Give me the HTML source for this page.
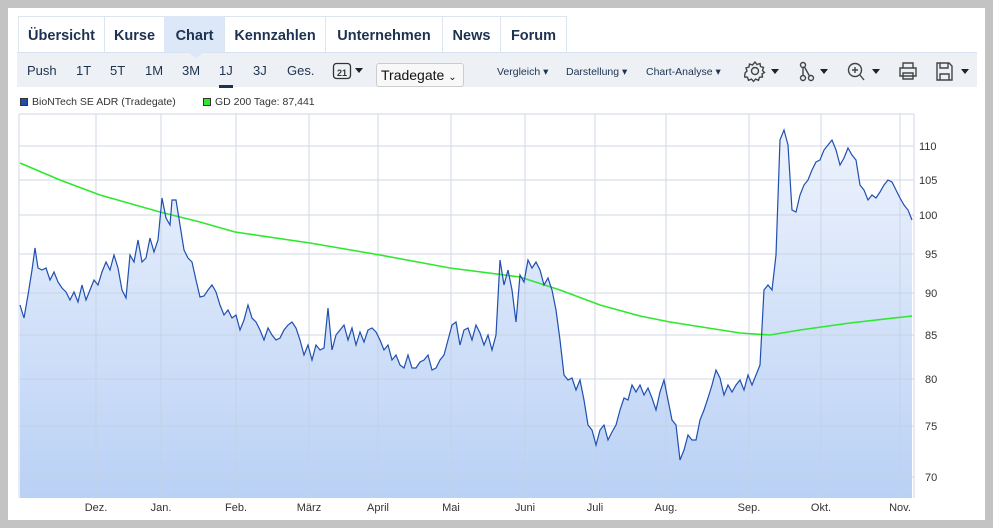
<!DOCTYPE html>
<html><head><meta charset="utf-8"><style>
*{margin:0;padding:0;box-sizing:border-box}
body{width:993px;height:528px;background:#c3c3c3;position:relative;overflow:hidden;font-family:"Liberation Sans",Arial,sans-serif}
#page{position:absolute;left:8px;top:8px;width:977px;height:512px;background:#fff}
.tab{position:absolute;top:16px;height:36px;line-height:38px;font-weight:bold;font-size:14.5px;color:#1d3250;text-align:center;border:1px solid #dde6f0;border-bottom:none}
#tb{position:absolute;left:17px;top:52px;width:960px;height:35px;background:#edf1f5;border-top:1px solid #d6e2f0}
.t{position:absolute;top:63px;font-size:13px;color:#1d3250}
.s{position:absolute;top:66px;font-size:10.5px;color:#1d3250}
.ax{position:absolute;font-size:11px;color:#333}
</style></head><body>
<div id="page"></div>
<div class="tab" style="left:18px;width:87px">Übersicht</div>
<div class="tab" style="left:104px;width:61px">Kurse</div>
<div class="tab" style="left:164px;width:61px;background:#dce8f8;border-color:#dce8f8">Chart</div>
<div class="tab" style="left:224px;width:102px">Kennzahlen</div>
<div class="tab" style="left:325px;width:118px">Unternehmen</div>
<div class="tab" style="left:442px;width:59px">News</div>
<div class="tab" style="left:500px;width:67px">Forum</div>
<div id="tb"></div>
<svg style="position:absolute;left:186px;top:51px" width="20" height="8"><polygon points="0,0 20,0 10,7" fill="#dce8f8"/></svg>
<div class="t" style="left:27px">Push</div>
<div class="t" style="left:76px">1T</div>
<div class="t" style="left:110px">5T</div>
<div class="t" style="left:145px">1M</div>
<div class="t" style="left:182px">3M</div>
<div class="t" style="left:219px">1J</div>
<div style="position:absolute;left:219px;top:85px;width:14px;height:3px;background:#1d3250"></div>
<div class="t" style="left:253px">3J</div>
<div class="t" style="left:287px">Ges.</div>
<svg style="position:absolute;left:332px;top:61px" width="35" height="20"><rect x="1.5" y="2.5" width="17" height="15" rx="3" fill="none" stroke="#333" stroke-width="1.3"/><text x="10" y="15" font-size="9" font-weight="bold" text-anchor="middle" fill="#333" font-family="Liberation Sans">21</text><polygon points="23,7 31,7 27,12" fill="#222"/></svg>
<div style="position:absolute;left:376px;top:63px;width:88px;height:24px;border:1px solid #ccc;border-radius:3px;background:#f8f8f8;font-size:14px;color:#111;padding:3px 0 0 4px">Tradegate <span style="font-size:10px">&#8964;</span></div>
<div class="s" style="left:497px">Vergleich ▾</div>
<div class="s" style="left:566px">Darstellung ▾</div>
<div class="s" style="left:646px">Chart-Analyse ▾</div>
<svg style="position:absolute;left:744px;top:59px" width="235" height="26" fill="none" stroke="#444" stroke-width="1.4">
<circle cx="11" cy="12" r="3.5"/><path d="M11 3l2 2.5 3-1 .5 3 3 1-1 3 2 2-2.5 1.5 .5 3-3 .3-1 3-3-1.2-2 2.3-2-2.3-3 1.2-1-3-3-.3.5-3L1 14l2-2-1-3 3-1 .5-3 3 1z"/>
<polygon points="27,10 35,10 31,15" fill="#222" stroke="none"/>
<circle cx="59" cy="6" r="2.5"/><circle cx="59" cy="19" r="2.5"/><circle cx="67" cy="19" r="2.5"/><path d="M59 8.5v8M60.5 8l5 9"/>
<polygon points="76,10 84,10 80,15" fill="#222" stroke="none"/>
<circle cx="111" cy="11" r="6.5"/><path d="M111 8v6M108 11h6M116 16l4 5"/>
<polygon points="128,10 136,10 132,15" fill="#222" stroke="none"/>
<path d="M159 9V4h10v5M156 9h16v8h-16zM159 14h10v6h-10z"/>
<path d="M193 4h12l3 3v14h-15zM196 4v5h8V4M196 21v-6h9v6"/>
<polygon points="217,10 225,10 221,15" fill="#222" stroke="none"/>
</svg>
<div style="position:absolute;left:20px;top:98px;width:8px;height:8px;background:#1f4fa8;border:1px solid #333"></div>
<div class="ax" style="left:32px;top:96px;font-size:10.5px">BioNTech SE ADR (Tradegate)</div>
<div style="position:absolute;left:203px;top:98px;width:8px;height:8px;background:#2ee82e;border:1px solid #333"></div>
<div class="ax" style="left:215px;top:96px;font-size:10.5px">GD 200 Tage: 87,441</div>
<svg style="position:absolute;left:0;top:0" width="993" height="528">
<defs><linearGradient id="g" x1="0" y1="0" x2="0" y2="1"><stop offset="0" stop-color="#eef3fd"/><stop offset="1" stop-color="#b9d1f5"/></linearGradient></defs>
<path fill="url(#g)" stroke="none" d="M20,305 L24,318 28,295 32,270 35,248 38,268 42,270 46,268 50,280 54,272 58,282 62,288 66,292 70,300 74,292 78,302 82,285 86,300 90,290 94,280 98,285 102,272 106,262 110,270 114,255 118,268 122,290 126,298 130,255 134,262 138,240 142,262 146,258 150,238 154,252 158,240 162,198 166,218 170,225 172,200 176,200 180,225 184,250 188,258 192,262 196,280 200,297 204,296 208,290 212,285 216,292 220,305 224,315 228,310 232,318 236,315 240,330 244,320 248,305 252,318 256,322 260,330 264,340 268,328 272,335 276,340 280,338 284,330 288,325 292,322 296,328 300,340 304,355 308,345 312,360 316,345 320,350 324,348 328,308 332,350 336,335 340,330 344,325 348,340 352,328 356,345 360,332 364,342 368,330 372,328 376,332 380,340 384,350 388,345 392,360 396,355 400,365 404,368 408,355 412,368 416,368 420,362 424,360 428,355 432,370 436,368 440,360 444,355 448,340 452,325 456,322 460,345 464,330 468,328 472,340 476,325 480,333 484,345 488,335 492,350 496,335 500,260 504,285 508,270 512,290 516,322 520,275 524,282 528,260 532,268 536,262 540,270 544,285 548,278 552,290 556,310 560,340 564,375 568,380 572,378 576,390 580,380 584,400 588,425 592,430 596,445 600,430 604,425 608,440 612,432 616,425 620,410 624,398 628,400 632,385 636,392 640,385 644,395 648,388 652,398 656,410 660,392 664,380 668,400 672,420 676,425 680,460 684,450 688,435 692,440 696,440 700,420 704,410 708,398 712,385 716,370 720,378 724,395 728,385 732,392 736,385 740,380 744,390 748,375 752,385 756,375 760,365 764,290 768,285 772,290 776,255 780,140 784,130 788,145 792,210 796,212 800,195 804,185 808,180 812,170 816,162 820,160 824,150 828,145 832,140 836,150 840,165 844,158 848,148 852,155 856,160 860,185 864,190 868,200 872,195 876,198 880,192 884,185 888,180 892,182 896,190 900,198 904,205 908,210 912,220 L912,498 L20,498Z"/>
<g stroke="#c5d0e0" stroke-width="1" opacity="0.8">
<line x1="19" y1="114" x2="914" y2="114"/>
<line x1="19" y1="114" x2="19" y2="498"/><line x1="914" y1="114" x2="914" y2="498"/>
<line x1="96" y1="114" x2="96" y2="498"/><line x1="161" y1="114" x2="161" y2="498"/><line x1="236" y1="114" x2="236" y2="498"/><line x1="309" y1="114" x2="309" y2="498"/><line x1="378" y1="114" x2="378" y2="498"/><line x1="451" y1="114" x2="451" y2="498"/><line x1="525" y1="114" x2="525" y2="498"/><line x1="595" y1="114" x2="595" y2="498"/><line x1="666" y1="114" x2="666" y2="498"/><line x1="749" y1="114" x2="749" y2="498"/><line x1="821" y1="114" x2="821" y2="498"/><line x1="900" y1="114" x2="900" y2="498"/>
<line x1="19" y1="146" x2="914" y2="146"/><line x1="19" y1="180" x2="914" y2="180"/><line x1="19" y1="215" x2="914" y2="215"/><line x1="19" y1="254" x2="914" y2="254"/><line x1="19" y1="293" x2="914" y2="293"/><line x1="19" y1="335" x2="914" y2="335"/><line x1="19" y1="379" x2="914" y2="379"/><line x1="19" y1="426" x2="914" y2="426"/><line x1="19" y1="477" x2="914" y2="477"/>
</g>
<polyline fill="none" stroke="#2ee82e" stroke-width="1.6" points="20,163 60,180 100,195 160,212 200,222 235,232 310,243 380,255 450,268 520,277 560,290 600,305 640,316 670,322 740,333 770,335 800,330 850,323 912,316"/>
<polyline fill="none" stroke="#1f4fb0" stroke-width="1.2" points="20,305 24,318 28,295 32,270 35,248 38,268 42,270 46,268 50,280 54,272 58,282 62,288 66,292 70,300 74,292 78,302 82,285 86,300 90,290 94,280 98,285 102,272 106,262 110,270 114,255 118,268 122,290 126,298 130,255 134,262 138,240 142,262 146,258 150,238 154,252 158,240 162,198 166,218 170,225 172,200 176,200 180,225 184,250 188,258 192,262 196,280 200,297 204,296 208,290 212,285 216,292 220,305 224,315 228,310 232,318 236,315 240,330 244,320 248,305 252,318 256,322 260,330 264,340 268,328 272,335 276,340 280,338 284,330 288,325 292,322 296,328 300,340 304,355 308,345 312,360 316,345 320,350 324,348 328,308 332,350 336,335 340,330 344,325 348,340 352,328 356,345 360,332 364,342 368,330 372,328 376,332 380,340 384,350 388,345 392,360 396,355 400,365 404,368 408,355 412,368 416,368 420,362 424,360 428,355 432,370 436,368 440,360 444,355 448,340 452,325 456,322 460,345 464,330 468,328 472,340 476,325 480,333 484,345 488,335 492,350 496,335 500,260 504,285 508,270 512,290 516,322 520,275 524,282 528,260 532,268 536,262 540,270 544,285 548,278 552,290 556,310 560,340 564,375 568,380 572,378 576,390 580,380 584,400 588,425 592,430 596,445 600,430 604,425 608,440 612,432 616,425 620,410 624,398 628,400 632,385 636,392 640,385 644,395 648,388 652,398 656,410 660,392 664,380 668,400 672,420 676,425 680,460 684,450 688,435 692,440 696,440 700,420 704,410 708,398 712,385 716,370 720,378 724,395 728,385 732,392 736,385 740,380 744,390 748,375 752,385 756,375 760,365 764,290 768,285 772,290 776,255 780,140 784,130 788,145 792,210 796,212 800,195 804,185 808,180 812,170 816,162 820,160 824,150 828,145 832,140 836,150 840,165 844,158 848,148 852,155 856,160 860,185 864,190 868,200 872,195 876,198 880,192 884,185 888,180 892,182 896,190 900,198 904,205 908,210 912,220"/>
<g font-family="Liberation Sans" font-size="11" fill="#333">
<text x="919" y="150">110</text><text x="919" y="184">105</text><text x="919" y="219">100</text><text x="925" y="258">95</text><text x="925" y="297">90</text><text x="925" y="339">85</text><text x="925" y="383">80</text><text x="925" y="430">75</text><text x="925" y="481">70</text>
<g text-anchor="middle"><text x="96" y="511">Dez.</text><text x="161" y="511">Jan.</text><text x="236" y="511">Feb.</text><text x="309" y="511">März</text><text x="378" y="511">April</text><text x="451" y="511">Mai</text><text x="525" y="511">Juni</text><text x="595" y="511">Juli</text><text x="666" y="511">Aug.</text><text x="749" y="511">Sep.</text><text x="821" y="511">Okt.</text><text x="900" y="511">Nov.</text></g>
</g>
</svg>
</body></html>
